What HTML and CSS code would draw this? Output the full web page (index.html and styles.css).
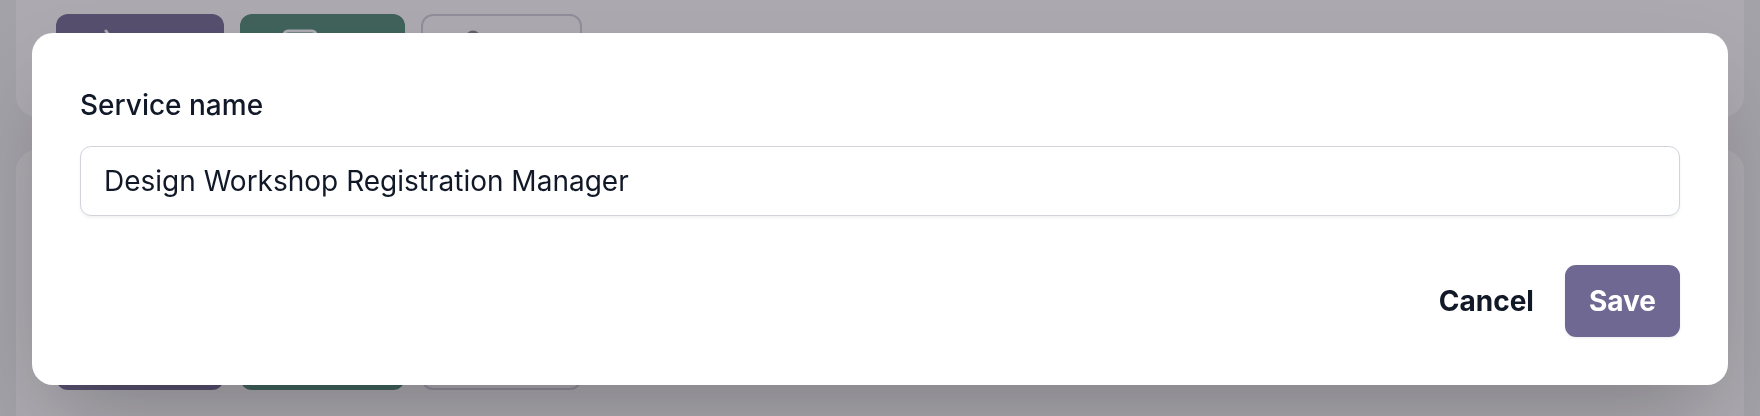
FILE: index.html
```html
<!DOCTYPE html>
<html lang="en">
<head>
<meta charset="utf-8">
<title>Edit service</title>
<link rel="stylesheet" href="styles.css">
</head>
<body>
<div class="page">
  <section class="card card-top">
    <button class="pbtn pbtn-purple"><svg class="ico" viewBox="0 0 28 28"><path d="M2 2 L9 12" stroke="#fff" stroke-width="3" fill="none" stroke-linecap="round"/></svg></button>
    <button class="pbtn pbtn-green"><svg class="ico ico-wide" viewBox="0 0 36 28"><rect x="2" y="2" width="32" height="24" rx="4" stroke="#fff" stroke-width="3" fill="none"/></svg></button>
    <button class="pbtn pbtn-outline"><svg class="ico" viewBox="0 0 28 28"><circle cx="14" cy="9" r="6" stroke="#8a8795" stroke-width="3" fill="none"/></svg></button>
  </section>
  <section class="card card-bottom">
    <button class="pbtn pbtn-purple"></button>
    <button class="pbtn pbtn-green"></button>
    <button class="pbtn pbtn-outline"></button>
  </section>
</div>

<div class="overlay">
  <div class="modal" role="dialog">
    <label class="field-label" for="svc">Service name</label>
    <input id="svc" class="field-input" type="text" value="Design Workshop Registration Manager">
    <div class="actions">
      <button class="btn btn-cancel">Cancel</button>
      <button class="btn btn-save">Save</button>
    </div>
  </div>
</div>
</body>
</html>
```
FILE: styles.css
```css
* { box-sizing: border-box; }
html, body { margin: 0; height: 100%; }
body {
  background: #f2f2f3;
  font-family: Inter, "Noto Sans", sans-serif;
  color: #111827;
  overflow: hidden;
}
.page {
  padding: 0 16px;
}
.card {
  background: #ffffff;
  display: flex;
  gap: 16px;
  padding-left: 40px;
}
.card-top {
  height: 117px;
  padding-top: 14px;
  border-radius: 0 0 21px 21px;
}
.card-bottom {
  margin-top: 33px;
  height: 266px;
  padding-top: 168px;
  border-radius: 21px 21px 0 0;
}
.pbtn {
  height: 72px;
  border-radius: 12px;
  border: 0;
  padding: 15px 0 0 0;
  display: flex;
  justify-content: center;
  align-items: flex-start;
}
.pbtn-purple { width: 168px; background: #756b95; padding-right: 44px; }
.pbtn-green { width: 165px; background: #4f8b76; padding-right: 46px; }
.pbtn-outline { width: 161px; background: #ffffff; border: 2px solid #d3d1dc; padding-right: 58px; padding-top: 13px; }
.ico { width: 28px; height: 28px; }
.ico-wide { width: 36px; }

.overlay {
  position: fixed;
  inset: 0;
  background: rgba(40, 37, 52, 0.39);
  padding: 33px 32px 0;
  display: flex;
  align-items: flex-start;
}
.modal {
  width: 100%;
  background: #ffffff;
  border-radius: 21px;
  padding: 51px 48px 48px;
  box-shadow: 0 44px 88px -21px rgba(0, 0, 0, 0.25);
  display: flex;
  flex-direction: column;
}
.field-label {
  font-size: 28px;
  line-height: 42px;
  font-weight: 500;
  color: #111827;
}
.field-input {
  margin-top: 20px;
  height: 70px;
  width: 100%;
  border: 1px solid #d1d5db;
  border-radius: 11px;
  padding: 0 22px 0 23px;
  font-family: Inter, "Noto Sans", sans-serif;
  font-size: 28px;
  color: #111827;
  background: #ffffff;
  box-shadow: 0 2px 3px rgba(0, 0, 0, 0.05);
  outline: none;
}
.actions {
  margin-top: 49px;
  display: flex;
  justify-content: flex-end;
  gap: 7px;
}
.btn {
  font-family: Inter, "Noto Sans", sans-serif;
  font-size: 28px;
  line-height: 42px;
  font-weight: 700;
  padding: 15px 24px;
  border: 0;
  border-radius: 11px;
  cursor: pointer;
}
.btn-cancel {
  background: transparent;
  color: #111827;
}
.btn-save {
  background: #6f6892;
  color: #ffffff;
  box-shadow: 0 1px 3px rgba(0, 0, 0, 0.08);
}
```
